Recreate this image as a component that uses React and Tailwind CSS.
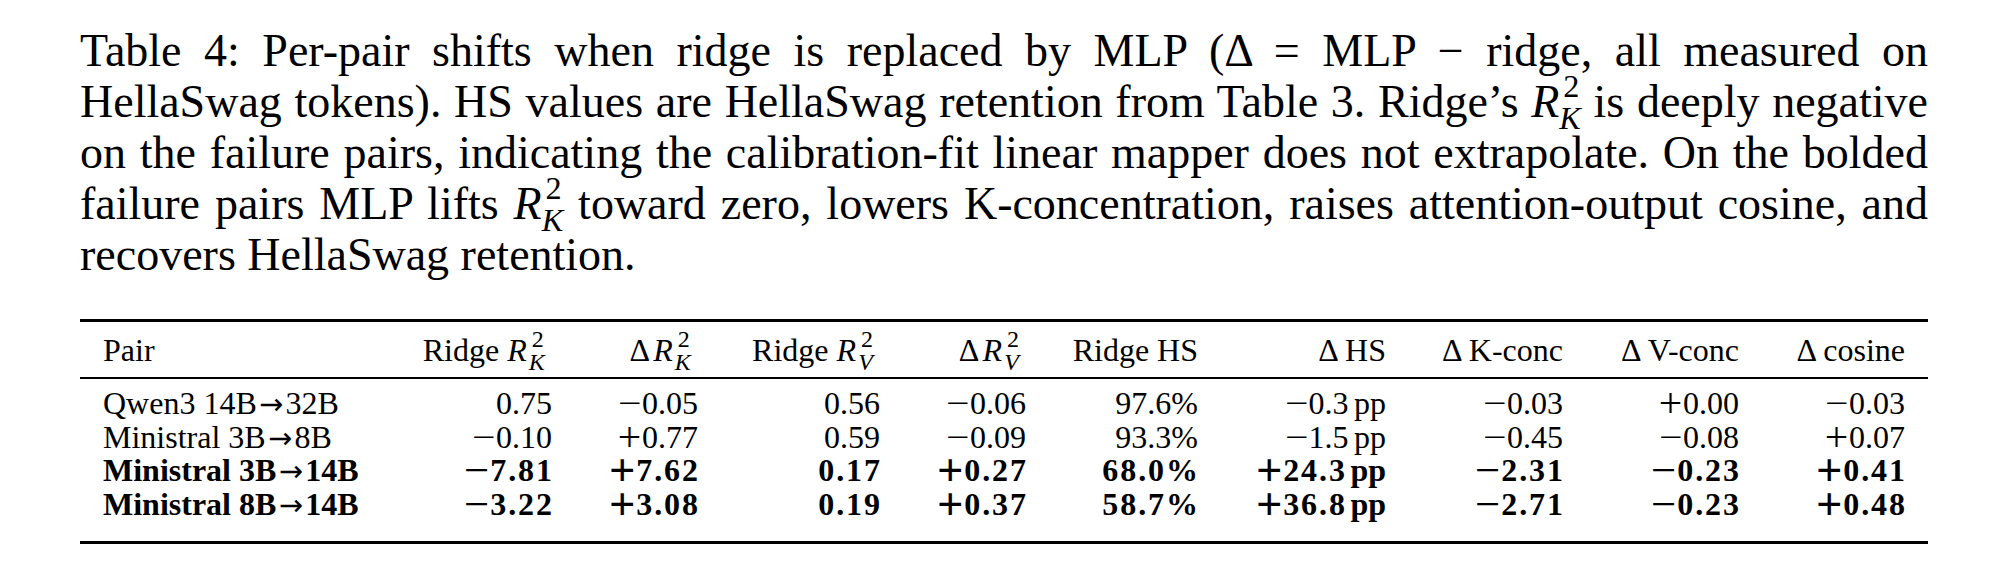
import React from 'react'

const cols = 'grid grid-cols-[313px_182px_146px_182px_146px_172px_188px_177px_176px_166px]'

// R^2 with a subscript, set the way LaTeX stacks them
function RSq({ sub, wide }) {
  if (wide) {
    return (
      <span className="whitespace-nowrap">
        <i className="pr-[0.08em]">R</i>
        <span className="text-[0.75em] align-[0.58em] leading-[0] ml-[0.1em]">2</span>
        <span className="text-[0.75em] align-[-0.36em] leading-[0] italic -ml-[0.62em] mr-[0.3em]">{sub}</span>
      </span>
    )
  }
  return (
    <span className="whitespace-nowrap">
      <i>R</i>
      <span className="text-[0.7em] align-[0.62em] leading-[0] ml-[0.12em]">2</span>
      <span className="text-[0.7em] align-[-0.38em] leading-[0] italic -ml-[0.62em]">{sub}</span>
    </span>
  )
}

function Sign({ s, bold }) {
  if (s === '−') {
    return (
      <span className={bold ? 'inline-block w-[0.89em] text-center scale-x-[1.4]' : 'inline-block w-[0.78em] text-center scale-x-[1.3]'}>
        −
      </span>
    )
  }
  return (
    <span className={bold ? 'inline-block w-[0.89em] text-center scale-[1.45]' : 'inline-block w-[0.78em] text-center scale-[1.3]'}>
      +
    </span>
  )
}

function Num({ v, bold }) {
  let sign = null
  let rest = v
  if (v[0] === '−' || v[0] === '+') {
    sign = v[0]
    rest = v.slice(1)
  }
  let unit = null
  if (rest.endsWith(' pp')) {
    unit = 'pp'
    rest = rest.slice(0, -3)
  }
  return (
    <span className="whitespace-nowrap">
      {sign && <Sign s={sign} bold={bold} />}
      <span className={bold ? 'tracking-[0.06em] -mr-[0.06em]' : ''}>{rest}</span>
      {unit && <span className="ml-[0.17em]">{unit}</span>}
    </span>
  )
}

function Pair({ from, to }) {
  return (
    <span className="whitespace-nowrap">
      {from}
      <span className="inline-block w-[1em] text-center font-normal font-['DejaVu_Sans',sans-serif] text-[0.9em]">→</span>
      {to}
    </span>
  )
}

const rows = [
  { a: 'Qwen3 14B', b: '32B', bold: false, vals: ['0.75', '−0.05', '0.56', '−0.06', '97.6%', '−0.3 pp', '−0.03', '+0.00', '−0.03'] },
  { a: 'Ministral 3B', b: '8B', bold: false, vals: ['−0.10', '+0.77', '0.59', '−0.09', '93.3%', '−1.5 pp', '−0.45', '−0.08', '+0.07'] },
  { a: 'Ministral 3B', b: '14B', bold: true, vals: ['−7.81', '+7.62', '0.17', '+0.27', '68.0%', '+24.3 pp', '−2.31', '−0.23', '+0.41'] },
  { a: 'Ministral 8B', b: '14B', bold: true, vals: ['−3.22', '+3.08', '0.19', '+0.37', '58.7%', '+36.8 pp', '−2.71', '−0.23', '+0.48'] },
]

export default function App() {
  return (
    <div className="w-[2008px] h-[566px] overflow-hidden bg-white text-black font-['Liberation_Serif','Times_New_Roman',serif]">
      <div className="ml-[80px] w-[1848px] pt-[25px]">
        {/* caption, line breaks kept as in the paper */}
        <div className="text-[46px] leading-[51px] text-justify">
          <div className="[text-align-last:justify]">
            Table 4: Per-pair shifts when ridge is replaced by MLP (Δ = MLP − ridge, all measured on
          </div>
          <div className="[text-align-last:justify]">
            HellaSwag tokens). HS values are HellaSwag retention from Table 3. Ridge’s <RSq sub="K" /> is deeply negative
          </div>
          <div className="[text-align-last:justify]">
            on the failure pairs, indicating the calibration-fit linear mapper does not extrapolate. On the bolded
          </div>
          <div className="[text-align-last:justify]">
            failure pairs MLP lifts <RSq sub="K" /> toward zero, lowers K-concentration, raises attention-output cosine, and
          </div>
          <div className="text-left">recovers HellaSwag retention.</div>
        </div>

        {/* table */}
        <div className="mt-[39px] border-t-[3px] border-b-[3px] border-black text-[32px]">
          <div className={`${cols} leading-[33px] pt-[12px] pb-[10px] border-b-2 border-black`}>
            <div className="px-[23px]">Pair</div>
            <div className="px-[23px] text-right whitespace-nowrap">Ridge <RSq sub="K" wide /></div>
            <div className="px-[23px] text-right whitespace-nowrap"><span className="mr-[0.1em]">Δ</span><RSq sub="K" wide /></div>
            <div className="px-[23px] text-right whitespace-nowrap">Ridge <RSq sub="V" wide /></div>
            <div className="px-[23px] text-right whitespace-nowrap"><span className="mr-[0.1em]">Δ</span><RSq sub="V" wide /></div>
            <div className="px-[23px] text-right whitespace-nowrap">Ridge HS</div>
            <div className="px-[23px] text-right whitespace-nowrap">Δ HS</div>
            <div className="px-[23px] text-right whitespace-nowrap">Δ K-conc</div>
            <div className="px-[23px] text-right whitespace-nowrap">Δ V-conc</div>
            <div className="px-[23px] text-right whitespace-nowrap">Δ cosine</div>
          </div>
          <div className="pt-[8px] pb-[20px] leading-[32.5px]">
            {rows.map((r, i) => (
              <div key={i} className={`${cols} ${r.bold ? 'font-bold' : ''}`}>
                <div className="px-[23px]">
                  <Pair from={r.a} to={r.b} />
                </div>
                {r.vals.map((v, j) => (
                  <div key={j} className="px-[23px] text-right">
                    <Num v={v} bold={r.bold} />
                  </div>
                ))}
              </div>
            ))}
          </div>
        </div>
      </div>
    </div>
  )
}
